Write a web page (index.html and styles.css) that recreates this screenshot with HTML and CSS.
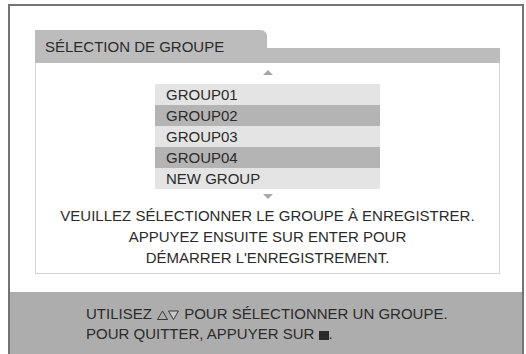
FILE: index.html
```html
<!DOCTYPE html>
<html lang="fr">
<head>
<meta charset="utf-8">
<title>Sélection de groupe</title>
<link rel="stylesheet" href="styles.css">
</head>
<body>
<div class="screen">
  <div class="main">
    <div class="panel">
      <div class="head">
        <div class="tab">SÉLECTION DE GROUPE</div>
        <div class="strip"></div>
      </div>
      <div class="body">
        <div class="arrow up"></div>
        <ul class="list">
          <li class="row light">GROUP01</li>
          <li class="row dark">GROUP02</li>
          <li class="row light">GROUP03</li>
          <li class="row dark">GROUP04</li>
          <li class="row light">NEW GROUP</li>
        </ul>
        <div class="arrow down"></div>
        <p class="msg">VEUILLEZ SÉLECTIONNER LE GROUPE À ENREGISTRER.<br>APPUYEZ ENSUITE SUR ENTER POUR<br>DÉMARRER L'ENREGISTREMENT.</p>
      </div>
    </div>
  </div>
  <div class="footer">
    <p class="hint">UTILISEZ <svg class="tri" width="24" height="10" viewBox="0 0 24 10"><path d="M1.5 9.5 L6.5 1 L11.5 9.5 Z" fill="none" stroke="#3a3a3a" stroke-width="1"/><path d="M12.5 1 L22.5 1 L17.5 9.5 Z" fill="#c8c8c8" stroke="#3a3a3a" stroke-width="1"/></svg> POUR SÉLECTIONNER UN GROUPE.<br>POUR QUITTER, APPUYER SUR <span class="stop"></span>.</p>
  </div>
</div>
</body>
</html>
```

FILE: styles.css
```css
html, body {
  margin: 0;
  padding: 0;
  background: #ffffff;
}
body {
  width: 526px;
  height: 354px;
  overflow: hidden;
  font-family: "Liberation Sans", Arial, sans-serif;
  color: #2b2b2b;
}
.screen {
  margin: 4px 2px 0 8px;
  height: 350px;
  border: 2px solid #747474;
  border-bottom: none;
  box-sizing: border-box;
  display: flex;
  flex-direction: column;
}
.main {
  padding: 24px 22px 18px 25px;
}
.panel {
  width: 465px;
}
.head {
  display: flex;
  align-items: flex-end;
  height: 33px;
}
.tab {
  width: 222px;
  height: 33px;
  padding-left: 10px;
  background: #bcbcbc;
  border-top-right-radius: 6px;
  font-size: 15px;
  line-height: 33px;
  white-space: nowrap;
}
.strip {
  flex: 1;
  height: 15px;
  background: #bcbcbc;
}
.body {
  height: 211px;
  box-sizing: border-box;
  border: 1px solid #d4d4d4;
  border-top: none;
  display: flex;
  flex-direction: column;
  align-items: center;
}
.arrow {
  width: 0;
  height: 0;
  border-left: 5px solid transparent;
  border-right: 5px solid transparent;
}
.arrow.up {
  margin-top: 7px;
  border-bottom: 5px solid #a8a8a8;
}
.arrow.down {
  margin-top: 5px;
  border-top: 5px solid #a8a8a8;
}
.list {
  list-style: none;
  margin: 9px 0 0;
  padding: 0;
  width: 225px;
}
.row {
  height: 21px;
  line-height: 21px;
  padding-left: 11px;
  font-size: 15px;
}
.row.light {
  background: #e4e4e4;
}
.row.dark {
  background: #b4b4b4;
}
.msg {
  margin: 6px 0 0;
  font-size: 15px;
  line-height: 21px;
  text-align: center;
}
.footer {
  flex: 1;
  background: #adadad;
  padding: 12px 0 0 76px;
}
.hint {
  margin: 0;
  font-size: 15px;
  line-height: 20px;
}
.tri {
  vertical-align: -1px;
}
.stop {
  display: inline-block;
  width: 10px;
  height: 9px;
  background: #2a2a2a;
  vertical-align: -1px;
}
```
